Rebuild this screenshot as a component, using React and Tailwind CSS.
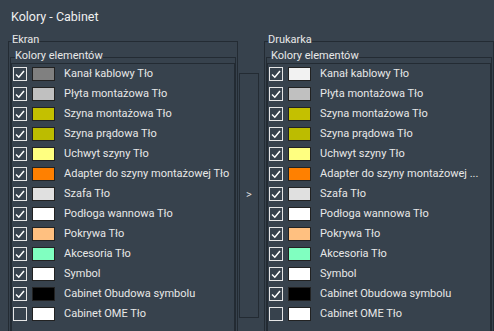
import React from 'react';

const rowsLeft = [
  { label: 'Kanał kablowy Tło', color: '#808080', on: true },
  { label: 'Płyta montażowa Tło', color: '#c0c0c0', on: true },
  { label: 'Szyna montażowa Tło', color: '#c4c000', on: true },
  { label: 'Szyna prądowa Tło', color: '#bcbc00', on: true },
  { label: 'Uchwyt szyny Tło', color: '#ffff80', on: true },
  { label: 'Adapter do szyny montażowej Tło', color: '#ff8000', on: true },
  { label: 'Szafa Tło', color: '#e0e0e0', on: true },
  { label: 'Podłoga wannowa Tło', color: '#ffffff', on: true },
  { label: 'Pokrywa Tło', color: '#ffc080', on: true },
  { label: 'Akcesoria Tło', color: '#80ffc0', on: true },
  { label: 'Symbol', color: '#ffffff', on: true },
  { label: 'Cabinet Obudowa symbolu', color: '#000000', on: true },
  { label: 'Cabinet OME Tło', color: '#ffffff', on: false },
];

const rowsRight = rowsLeft.map((r, i) => {
  if (i === 0) return { ...r, color: '#f2f2f2' };
  if (i === 5) return { ...r, label: 'Adapter do szyny montażowej ...' };
  return r;
});

const CheckBox = ({ on }) => (
  <div className="w-[14px] h-[14px] border border-[#e6e6e6] flex items-center justify-center shrink-0">
    {on && (
      <svg width="12" height="12" viewBox="0 0 12 12">
        <polyline points="2,6.5 4.8,9.2 10,3" fill="none" stroke="#ffffff" strokeWidth="1.5" />
      </svg>
    )}
  </div>
);

const ColorRow = ({ label, color, on }) => (
  <div className="h-[20px] flex items-center whitespace-nowrap">
    <div className="ml-px">
      <CheckBox on={on} />
    </div>
    <div className="ml-[5px] w-[23px] h-[14px] border border-[#222222] shrink-0" style={{ backgroundColor: color }} />
    <span className="ml-[9px] leading-[16px]">{label}</span>
  </div>
);

const GroupPanel = ({ title, rows }) => (
  <div className="w-[230px] h-[300px] border border-[#232b33] shrink-0">
    <div className="-mt-[10px] ml-[3px] w-fit leading-[16px] bg-[#37424d]">{title}</div>
    <div className="mt-[9px] mx-px h-[290px] border border-[#232b33]">
      <div className="-mt-[10px] ml-[4px] w-fit leading-[16px] bg-[#37424d]">Kolory elementów</div>
      <div className="-mt-px h-[280px] border border-[#232b33] overflow-hidden">
        {rows.map((r) => (
          <ColorRow key={r.label} {...r} />
        ))}
      </div>
    </div>
  </div>
);

export default function App() {
  return (
    <div className="w-[494px] h-[331px] overflow-hidden bg-[#37424d] text-[#e8e8e8] text-[11px] font-['Roboto','Liberation_Sans',sans-serif]">
      <div className="pl-[11px] pt-[9px] h-[41px] leading-[16px] text-[12.5px] text-[#f0f0f0]">Kolory - Cabinet</div>
      <div className="flex pl-[8px]">
        <GroupPanel title="Ekran" rows={rowsLeft} />
        <div className="w-[26px] shrink-0">
          <div className="mt-[32px] ml-px w-[20px] h-[245px] border border-[#232b33] flex items-center justify-center text-[11px] text-[#dddddd]">
            &gt;
          </div>
        </div>
        <GroupPanel title="Drukarka" rows={rowsRight} />
      </div>
    </div>
  );
}
